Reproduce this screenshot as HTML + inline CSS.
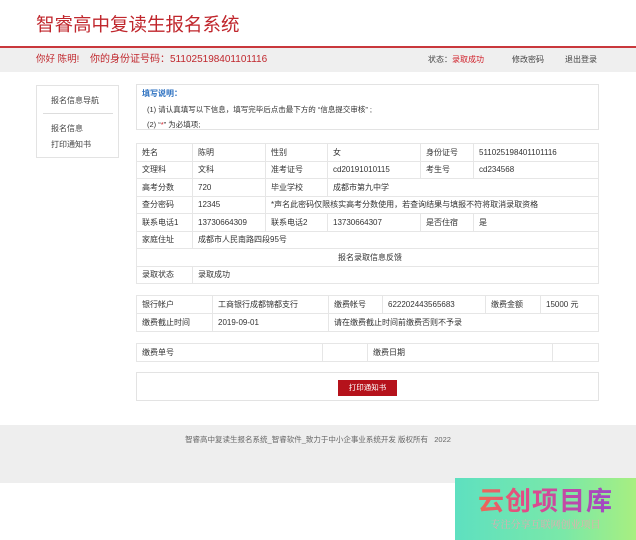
<!DOCTYPE html>
<html><head><meta charset="utf-8"><style>
*{margin:0;padding:0;box-sizing:border-box}
body{width:636px;height:540px;background:#fff;font-family:"Liberation Sans","Noto Sans CJK SC",sans-serif;position:relative;overflow:hidden;color:#333}
.a{position:absolute}
.title{left:36px;top:11px;font-size:18.5px;color:#c0272d}
.bar{left:0;top:46px;width:636px;height:26px;background:#efefef;border-top:2px solid #c9383c;font-size:9.5px;line-height:24px}
.bar span{position:absolute;top:0}
.box{border:1px solid #e3e3e3;background:#fff}
table{border-collapse:collapse;position:absolute;font-size:8px;color:#333}
td{border:1px solid #e6e6e6;padding:0 0 0 5px;height:17.5px;white-space:nowrap}
.ft{left:0;top:425px;width:636px;height:58px;background:#eee;font-size:7.5px;color:#666;text-align:center;padding-top:9px}
.wm{left:455px;top:478px;width:181px;height:62px;background:linear-gradient(90deg,#5ee0c0,#7ae8a8 60%,#a8ef80);text-align:center}
.wt{font-size:26px;font-weight:bold;margin-top:8px;line-height:30px;letter-spacing:1px;background:linear-gradient(90deg,#f07a3a,#e04a8a 40%,#8a4ad8);-webkit-background-clip:text;background-clip:text;color:transparent}
</style></head><body>
<div class="a title">智睿高中复读生报名系统</div>
<div class="a bar">
<span style="left:36px;color:#c0272d">你好 陈明!</span>
<span style="left:90px;color:#c0272d;font-size:10px">你的身份证号码：511025198401101116</span>
<span style="left:428px;font-size:8px;color:#444">状态：<span style="position:static;color:#d0202a">录取成功</span></span>
<span style="left:512px;font-size:8px;color:#444">修改密码</span>
<span style="left:565px;font-size:8px;color:#444">退出登录</span>
</div>
<div class="a box" style="left:36px;top:85px;width:83px;height:73px;font-size:8px;color:#444">
<div class="a" style="left:14px;top:9px">报名信息导航</div>
<div class="a" style="left:6px;top:27px;width:70px;border-top:1px solid #ddd"></div>
<div class="a" style="left:14px;top:37px">报名信息</div>
<div class="a" style="left:14px;top:53px">打印通知书</div>
</div>
<div class="a box" style="left:136px;top:84px;width:463px;height:46px;font-size:7.5px">
<div class="a" style="left:5px;top:3px;color:#2a6fc0;font-weight:bold;font-size:8px">填写说明：</div>
<div class="a" style="left:10px;top:19px">(1) 请认真填写以下信息，填写完毕后点击最下方的 “信息提交审核” ;</div>
<div class="a" style="left:10px;top:34px">(2)  “<span style="color:#d0202a">*</span>” 为必填项;</div>
</div>
<table style="left:136px;top:143px;width:463px">
<tr><td style="width:56px">姓名</td><td style="width:73px">陈明</td><td style="width:62px">性别</td><td style="width:93px">女</td><td style="width:53px">身份证号</td><td>511025198401101116</td></tr>
<tr><td>文理科</td><td>文科</td><td>准考证号</td><td>cd20191010115</td><td>考生号</td><td>cd234568</td></tr>
<tr><td>高考分数</td><td>720</td><td>毕业学校</td><td colspan="3">成都市第九中学</td></tr>
<tr><td>查分密码</td><td>12345</td><td colspan="4">*声名此密码仅限核实高考分数使用，若查询结果与填报不符将取消录取资格</td></tr>
<tr><td>联系电话1</td><td>13730664309</td><td>联系电话2</td><td>13730664307</td><td>是否住宿</td><td>是</td></tr>
<tr><td>家庭住址</td><td colspan="5">成都市人民南路四段95号</td></tr>
<tr><td colspan="6" style="text-align:center">报名录取信息反馈</td></tr>
<tr><td>录取状态</td><td colspan="5">录取成功</td></tr>
</table>
<table style="left:136px;top:295px;width:463px">
<tr><td style="width:76px;height:18px">银行帐户</td><td style="width:116px">工商银行成都锦都支行</td><td style="width:54px">缴费帐号</td><td style="width:103px">622202443565683</td><td style="width:55px">缴费金额</td><td>15000 元</td></tr>
<tr><td style="height:18px">缴费截止时间</td><td>2019-09-01</td><td colspan="4">请在缴费截止时间前缴费否则不予录</td></tr>
</table>
<table style="left:136px;top:343px;width:463px">
<tr><td style="width:186px;height:17px">缴费单号</td><td style="width:45px"></td><td style="width:185px">缴费日期</td><td></td></tr>
</table>
<div class="a box" style="left:136px;top:372px;width:463px;height:29px">
<div class="a" style="left:201px;top:7px;width:59px;height:16px;background:#b5121b;color:#fff;font-size:7.5px;line-height:16px;text-align:center">打印通知书</div>
</div>
<div class="a ft">智睿高中复读生报名系统_智睿软件_致力于中小企事业系统开发 版权所有 &nbsp; 2022</div>
<div class="a wm">
<div class="wt">云创项目库</div>
<div style="font-size:10px;color:#e8a8b0;font-family:'Noto Serif CJK SC',serif">专注分享互联网创业项目</div>
</div>
</body></html>
